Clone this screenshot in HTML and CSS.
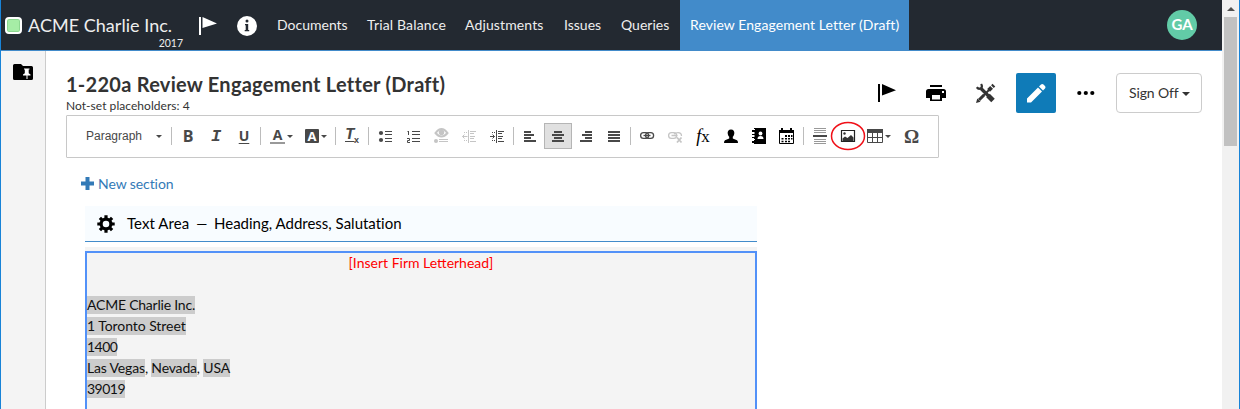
FILE: index.html
```html
<!DOCTYPE html>
<html lang="en">
<head>
<meta charset="utf-8">
<title>1-220a Review Engagement Letter (Draft)</title>
<link rel="stylesheet" href="styles.css">
</head>
<body>
<div class="window">
  <div class="app">
    <header class="topbar">
      <div class="brand">
        <span class="status"></span>
        <div class="client"><span class="client-name">ACME Charlie Inc.</span><span class="year">2017</span></div>
      </div>
      <svg class="flag-white" width="18" height="19" viewBox="0 0 18 19"><path fill="#fff" d="M0 0h2v18H0zM3.500 0 18 6.500 3.500 11z"/></svg>
      <svg class="info" width="20" height="20" viewBox="0 0 20 20"><circle cx="10" cy="10" r="10" fill="#fff"/><circle cx="10" cy="5" r="1.500" fill="#232931"/><path fill="#232931" d="M8 8h3.200v6h1v1.300H7.700V14h1V9.300H8z"/></svg>
      <nav class="nav">
        <a class="n1">Documents</a><a class="n2">Trial Balance</a><a class="n3">Adjustments</a><a class="n4">Issues</a><a class="n5">Queries</a><a class="active">Review Engagement Letter (Draft)</a>
      </nav>
      <span class="avatar">GA</span>
    </header>
    <div class="body">
      <aside class="sidebar">
        <svg width="20" height="16" viewBox="0 0 20 16"><path d="M1.500 0H8l2 2h8.500q1.500 0 1.500 1.500v11q0 1.500-1.500 1.500h-17Q0 16 0 14.500v-13Q0 0 1.500 0z"/><path fill="#fff" d="M11 4.500h5.500v1h-.8v3.700l1.800 1.300v1h-3V15h-1v-3.500H10v-1l1.800-1.300V5.500H11z"/></svg>
      </aside>
      <main class="main">
        <div class="heading">
          <div class="titles">
            <h1>1-220a Review Engagement Letter (Draft)</h1>
            <p>Not-set placeholders: 4</p>
          </div>
          <div class="actions">
            <svg class="act-flag" width="18" height="18" viewBox="0 0 18 18"><path d="M0 0h2v18H0zM4 0l14 6.300L4 11.500z"/></svg>
            <svg class="act-print" width="20" height="16" viewBox="0 0 20 16"><path d="M4 0h12v2H4zM2.500 4h15Q20 4 20 6.500V13h-4v3H4v-3H0V6.500Q0 4 2.500 4z"/><path fill="#fff" d="M6 10h8v4.500H6zM16 6h2v2h-2z"/></svg>
            <svg class="act-tools" width="20" height="20" viewBox="0 0 20 20"><g fill="none" stroke="#333"><path stroke-width="3.200" d="M5 5.500 13 13.500"/><path stroke-width="5" d="m12 12.500 5 5"/><path stroke-width="2.200" d="M.8 4.200q1.500 2.300 3.800 1.200 2.300-1.500.5-4.400"/><path stroke-width="2" d="M5 15 14 6"/><path stroke-width="3" d="m3 17 5-5"/><path stroke-width="4" d="m12.600 7.400 3-3"/><path stroke-width="3.800" d="m16.400 3.600 1.500-1.500"/></g><path fill="#333" d="m0 20 1.300-4.500L4.500 18.700z"/></svg>
            <span class="edit"><svg width="19" height="19" viewBox="0 0 19 19"><path fill="#fff" d="M0 14.500 11 3.500 15 7.500 4 18.500H0zM12 2.500l2-2q1.300-1 2.500 0l1.500 1.500q1 1.300 0 2.500l-2 2z"/></svg></span>
            <svg class="act-more" width="18" height="6" viewBox="0 0 18 6"><circle cx="2.300" cy="3" r="2.100"/><circle cx="8.800" cy="3" r="2.100"/><circle cx="15.300" cy="3" r="2.100"/></svg>
            <span class="signoff"><span>Sign Off</span><i class="caret"></i></span>
          </div>
        </div>

        <div class="toolbar">
          <span class="combo"><span>Paragraph</span><i class="caret small"></i></span>
          <i class="sep"></i>
          <span class="tool letter b">B</span><span class="tool letter i">I</span><span class="tool letter u">U</span>
          <i class="sep"></i>
          <span class="tool wide"><span class="fg">A</span><i class="caret small"></i></span>
          <span class="tool wide"><span class="bg">A</span><i class="caret small"></i></span>
          <i class="sep"></i>
          <span class="tool clear"><span class="t">T</span><span class="x">x</span></span>
          <i class="sep"></i>
          <svg class="tool" viewBox="0 0 28 26"><g fill="#484848"><circle cx="10" cy="10" r="2.100"/><circle cx="10" cy="17" r="2.100"/><path d="M14 8h7v1h-7zM14 11h7v1h-7zM14 15h7v1h-7zM14 18h7v1h-7z"/></g></svg>
          <svg class="tool" viewBox="0 0 28 26"><path fill="#484848" d="M13 8h8v1h-8zM13 11h8v1h-8zM13 15h8v1h-8zM13 18h8v1h-8z"/><path fill="none" stroke="#484848" d="M8.500 8.500h1V12M9.500 8v4M8 15.500h2.500v2h-2v2H11"/></svg>
          <svg class="tool" viewBox="0 0 28 26"><path fill="none" stroke="#c5c5c5" stroke-width="2" d="M8.500 10Q14.500 2 20.500 10 14.500 17 8.500 10z"/><circle cx="14.500" cy="9.500" r="2.700" fill="#c5c5c5"/><circle cx="9" cy="18" r="2" fill="#c5c5c5"/><path fill="#c5c5c5" d="M12 16h9v1h-9zM12 18h9v1h-9z"/></svg>
          <svg class="tool" viewBox="0 0 28 26"><g fill="none" stroke="#c5c5c5"><path d="M13.500 7v13M15 8.500h6M15 10.500h4M15 13.500h5M15 15.500h4M15 18.500h6M7.500 13.500h5M9.500 11.500 7.500 13.500l2 2"/><path stroke-dasharray="1 1" d="M9 9.500h4M9 17.500h4"/></g></svg>
          <svg class="tool" viewBox="0 0 28 26"><g fill="none" stroke="#484848"><path d="M13.500 7v13M15 8.500h6M15 10.500h4M15 13.500h5M15 15.500h4M15 18.500h6M7 13.500h4.500M9.500 11.500l2 2-2 2"/><path stroke-dasharray="1 1" d="M9 9.500h4M9 17.500h4"/></g></svg>
          <i class="sep"></i>
          <svg class="tool" viewBox="0 0 28 26"><path fill="#484848" d="M8 8h7v2H8zM8 11h10v2H8zM8 14h7v2H8zM8 17h12v2H8z"/></svg>
          <svg class="tool selected" viewBox="1 1 26 24"><path fill="#484848" d="M10 8h8v2h-8zM8 11h12v2H8zM10 14h8v2h-8zM8 17h12v2H8z"/></svg>
          <svg class="tool" viewBox="0 0 28 26"><path fill="#484848" d="M13 8h7v2h-7zM10 11h10v2H10zM13 14h7v2h-7zM8 17h12v2H8z"/></svg>
          <svg class="tool" viewBox="0 0 28 26"><path fill="#484848" d="M8 8h12v2H8zM8 11h12v2H8zM8 14h12v2H8zM8 17h12v2H8z"/></svg>
          <i class="sep"></i>
          <svg class="tool" viewBox="0 0 28 26"><g fill="none" stroke="#484848" stroke-width="1.300"><rect x="7.600" y="9.600" width="8" height="5.800" rx="2.900"/><rect x="12.600" y="9.600" width="8" height="5.800" rx="2.900"/><path d="M10.500 12.500h7"/></g></svg>
          <svg class="tool" viewBox="0 0 28 26"><g fill="none" stroke="#c5c5c5" stroke-width="1.300"><rect x="7.600" y="9.600" width="8" height="5.800" rx="2.900"/><path d="M13 11q1.500-1.400 4-1.400 3.500 0 3.500 3.500M10.500 12.500h6"/><path stroke-width="1.800" d="m16 14.500 4.500 5M20.500 14.500l-4.500 5"/></g></svg>
          <span class="tool fx"><i>f</i>x</span>
          <svg class="tool" viewBox="0 0 28 26"><path d="M14 6.500c2.500 0 3.600 1.800 3.300 4-.2 1.600-.8 2.600-1.500 3.300v1.700l4.200 1.700q1 .5 1 2.800H7q0-2.300 1-2.800l4.200-1.700v-1.700c-.7-.7-1.300-1.700-1.500-3.300-.3-2.200.8-4 3.300-4z"/></svg>
          <svg class="tool" viewBox="0 0 28 26"><path d="M9 5h12v16H9zM7 7h2v2H7zM7 11h2v1H7zM7 14h2v1H7zM7 18h2v2H7z"/><path fill="#fff" d="M9 6h1v1H9zM9 9.500h1v1H9zM9 12.500h1v1H9zM9 16h1v1H9z"/><circle cx="15.500" cy="10.500" r="1.900" fill="#fff"/><path fill="#fff" d="M12.500 16q0-3 3-3t3 3z"/></svg>
          <svg class="tool" viewBox="0 0 28 26"><path fill="none" stroke="#000" d="M6.500 7.500h14v13h-14z"/><path d="M6 7h15v3H6zM8 5h2v3H8zM17 5h2v3h-2z"/><path d="M12 12h2v2h-2zM15 12h2v2h-2zM18 12h1.500v2H18zM8.500 15h2v1.500h-2zM12 15h2v1.500h-2zM15 15h2v1.500h-2zM18 15h1.500v1.500H18zM8.500 17.700h2v1.500h-2zM12 17.700h2v1.500h-2zM15 17.700h2v1.500h-2z"/></svg>
          <i class="sep"></i>
          <svg class="tool" viewBox="0 0 28 26"><path fill="#999" d="M8 5h12v1H8zM8 7h12v1H8zM8 9h12v1H8zM8 16h12v1H8zM8 18h12v1H8zM8 20h12v1H8z"/><path fill="#484848" d="M7 12h14v2H7z"/></svg>
          <span class="tool image"><svg width="28" height="26" viewBox="0 0 28 26"><path fill="#fff" stroke="#222" stroke-width="1.200" d="M7.500 7.500h13v11h-13z"/><circle cx="10.500" cy="10.500" r="1.200" fill="#333"/><path fill="#333" d="M8.500 18v-2.500l2.500-2 2.500 1.500 3.500-3 2.500 2.500V18z"/></svg><svg class="ring" width="36" height="30" viewBox="0 0 36 30"><ellipse cx="18" cy="15" rx="16.500" ry="13.500" fill="none" stroke="#f01018" stroke-width="1.500"/></svg></span>
          <span class="tool wide table"><svg width="16" height="14" viewBox="0 0 16 14"><path fill="#484848" d="M0 0h16v4H0z"/><path fill="none" stroke="#484848" d="M.5 3.500h15v10H.5zM.5 8.500h15M5.500 4v9M10.500 4v9"/></svg><i class="caret small"></i></span>
          <span class="tool omega">Ω</span>
        </div>

        <a class="new"><svg width="13" height="13" viewBox="0 0 13 13"><path fill="#337ab7" d="M4.500 0h4v4.500H13v4H8.500V13h-4V8.500H0v-4h4.500z"/></svg><span>New section</span></a>

        <section class="document">
          <div class="section-head">
            <svg width="18" height="18" viewBox="-9 -9 18 18"><g stroke="#000" stroke-width="3.200"><path d="M0-8.700V-5M0 8.700V5M-8.700 0H-5M8.700 0H5M-6.100-6.100-3.800-3.800M6.100 6.100 3.800 3.800M-6.100 6.100-3.800 3.800M6.100-6.100 3.800-3.800"/><circle r="4.900" fill="none" stroke-width="3.200"/></g></svg>
            <span class="kind">Text Area</span><span class="dash">—</span><span class="desc">Heading, Address, Salutation</span>
          </div>
          <div class="editor">
            <div class="page">
              <p class="letterhead"><span>[Insert Firm Letterhead]</span></p>
              <p>&nbsp;</p>
              <p><mark class="tight">ACME Charlie Inc.</mark></p>
              <p><mark class="street">1 Toronto Street</mark></p>
              <p><mark class="digits">1400</mark></p>
              <p class="city"><mark>Las Vegas</mark>, <mark>Nevada</mark>, <mark>USA</mark></p>
              <p><mark class="digits">39019</mark></p>
            </div>
          </div>
        </section>
      </main>
    </div>
  </div>
  <div class="scrollbar"><i class="up"></i><i class="thumb"></i></div>
</div>
</body>
</html>
```
FILE: styles.css
```css
* { box-sizing: border-box; }
body { margin: 0; font-family: Lato, sans-serif; color: #333; background: #fff; }
h1, p { margin: 0; }
svg { display: block; flex: none; }
.window { display: flex; width: 1240px; height: 409px; overflow: hidden; border-left: 1px solid #1883d7; border-right: 1px solid #1883d7; }
.app { flex: 1; display: flex; flex-direction: column; min-width: 0; }

.topbar { display: flex; height: 51px; flex: none; background: #232931; border-bottom: 1px solid #428bca; color: #eee; }
.brand { display: flex; width: 197px; padding-left: 4px; }
.status { width: 17px; height: 17px; margin-top: 17px; border: 2px solid #fff; border-radius: 4px; background: #a6eda6; box-shadow: inset 0 0 0 1px #8cd790; }
.client { display: flex; flex-direction: column; width: 161px; padding: 14px 0 0 6px; white-space: nowrap; }
.client-name { font-size: 18px; line-height: 23px; letter-spacing: .03px; }
.year { align-self: flex-end; font-size: 10.5px; line-height: 12px; }
.flag-white { margin: 17px 0 0 1px; }
.brand + .flag-white { margin-left: 1px; }
.info { margin: 16px 0 0 20px; }
.nav { display: flex; margin-left: 10px; font-size: 14px; line-height: 50px; white-space: nowrap; }
.nav a { padding: 0 10px; height: 50px; }
.nav .n1 { width: 90px; }
.nav .n2 { width: 98px; letter-spacing: .16px; }
.nav .n3 { width: 99px; letter-spacing: .13px; }
.nav .n4 { width: 57px; }
.nav .n5 { width: 69px; }
.nav .active { width: 229px; background: #428bca; color: #fff; letter-spacing: .07px; }
.avatar { width: 30px; height: 30px; margin: 10px 25px 0 auto; border-radius: 50%; background: #62cba7; color: #fff; font-weight: bold; font-size: 15px; line-height: 29px; text-align: center; }

.body { display: flex; flex: 1; min-height: 0; }
.sidebar { width: 45px; padding: 13px 0 0 12px; background: #f4f4f4; border-right: 1px solid #ccc; }
.main { flex: 1; padding-left: 20px; }
.heading { display: flex; height: 64px; }
.titles { width: 811px; padding-top: 21px; white-space: nowrap; }
h1 { font-size: 20px; line-height: 24px; letter-spacing: .26px; }
.titles p { font-size: 12px; line-height: 15px; margin-top: 2px; letter-spacing: .04px; }
.actions { display: flex; align-items: center; height: 40px; margin-top: 22px; }
.act-flag { margin-left: 1px; }
.act-print { margin-left: 30px; }
.act-tools { margin-left: 30px; }
.edit { display: flex; align-items: center; justify-content: center; width: 40px; height: 40px; margin-left: 20px; border-radius: 2px; background: #0f7bb8; }
.act-more { margin-left: 21px; }
.signoff { display: flex; align-items: center; width: 86px; height: 40px; margin-left: 21px; padding-left: 12px; border: 1px solid #ccc; border-radius: 4px; font-size: 14px; line-height: 18px; white-space: nowrap; }
.signoff span { padding-bottom: 1px; letter-spacing: -.12px; }
.caret { flex: none; margin: 1px 0 0 3px; border-left: 4px solid transparent; border-right: 4px solid transparent; border-top: 4px solid #333; }
.caret.small { margin: 0 0 0 2px; border-left-width: 3px; border-right-width: 3px; border-top-width: 3px; border-top-color: #484848; }

.toolbar { display: flex; width: 873px; height: 43px; padding-top: 7px; border: 1px solid #c8c8c8; border-radius: 1px; color: #484848; font-family: "Liberation Sans", sans-serif; }
.combo { display: flex; align-items: center; justify-content: space-between; width: 102px; height: 26px; padding: 0 7px 0 19px; font-size: 12px; }
.sep { width: 1px; height: 18px; margin: 4px 2px 0; background: #bcbcbc; flex: none; }
.tool { width: 28px; height: 26px; flex: none; }
.wide { display: flex; align-items: center; width: 35px; padding-left: 6px; }
.wide.table { padding-left: 5px; }
.selected { background: #e0e0e0; border: 1px solid #b5b5b5; }
.letter { font: bold 16px/27px "Open Sans", sans-serif; text-align: center; }
.letter.i { font: italic bold 17px/28px "Liberation Mono", monospace; }
.letter.u { font-weight: bold; font-size: 14px; line-height: 26px; text-decoration: underline; text-underline-offset: 2px; text-decoration-thickness: 1px; }
.fg { width: 15px; height: 15px; margin: 1px 0 0 1px; border-bottom: 2px solid #999; font: bold 14px/12px "Open Sans", sans-serif; text-align: center; }
.bg { width: 14px; height: 14px; margin-left: 1px; border-radius: 1px; background: #484848; color: #fff; font: bold 13px/14px "Open Sans", sans-serif; text-align: center; }
.clear { display: flex; padding-left: 7px; }
.clear .t { width: 9px; height: 19px; font: italic bold 16px/25px "Liberation Mono", monospace; text-decoration: underline; text-decoration-thickness: 1px; text-underline-offset: 2px; }
.clear .x { font: bold 9px/35px "Liberation Sans", sans-serif; }
.fx { font: 17px/26px "Liberation Serif", serif; color: #000; text-align: center; }
.fx i { font-size: 18px; }
.image { position: relative; }
.ring { position: absolute; left: -4px; top: -2px; }
.omega { padding-left: 1px; font: bold 19px/27px "Liberation Serif", serif; text-align: center; }

.new { display: flex; align-items: center; height: 18px; margin: 17px 0 0 15px; color: #337ab7; font-size: 14px; }
.new svg { margin-top: -1px; }
.new span { margin: -2px 0 0 4px; font-variant-ligatures: none; letter-spacing: -.08px; }
.document { width: 672px; margin: 13px 0 0 19px; font-variant-ligatures: none; }
.section-head { display: flex; align-items: center; height: 36px; padding-left: 12px; background: #f8fcff; border-bottom: 1px solid #428bca; color: #000; font-size: 15px; white-space: nowrap; }
.section-head span { padding-bottom: 2px; }
.kind { margin-left: 12px; letter-spacing: .06px; }
.section-head .dash { margin-left: 7px; padding-bottom: 0; font-size: 14px; }
.desc { margin-left: auto; width: 543px; }
.editor { margin-top: 5px; padding-top: 4px; background: #f4f4f4; }
.page { height: 180px; border: 2px solid #5291f8; font: 14px/21px Lato, sans-serif; color: #111; white-space: nowrap; }
.page p { height: 21px; position: relative; top: -1px; }
.page .letterhead { color: #f00; text-align: center; font-variant-ligatures: normal; }
mark { color: inherit; background: #ccc; padding: 0 0 1px; }
.tight { letter-spacing: -.22px; }
.street { letter-spacing: -.06px; }
.digits { letter-spacing: -.5px; }
.city { letter-spacing: -.17px; }

.scrollbar { display: flex; flex-direction: column; align-items: center; width: 17px; flex: none; background: #f1f1f1; }
.up { margin-top: 7px; border-left: 4px solid transparent; border-right: 4px solid transparent; border-bottom: 4px solid #505050; }
.thumb { width: 13px; height: 129px; margin-top: 6px; background: #c1c1c1; }
```
